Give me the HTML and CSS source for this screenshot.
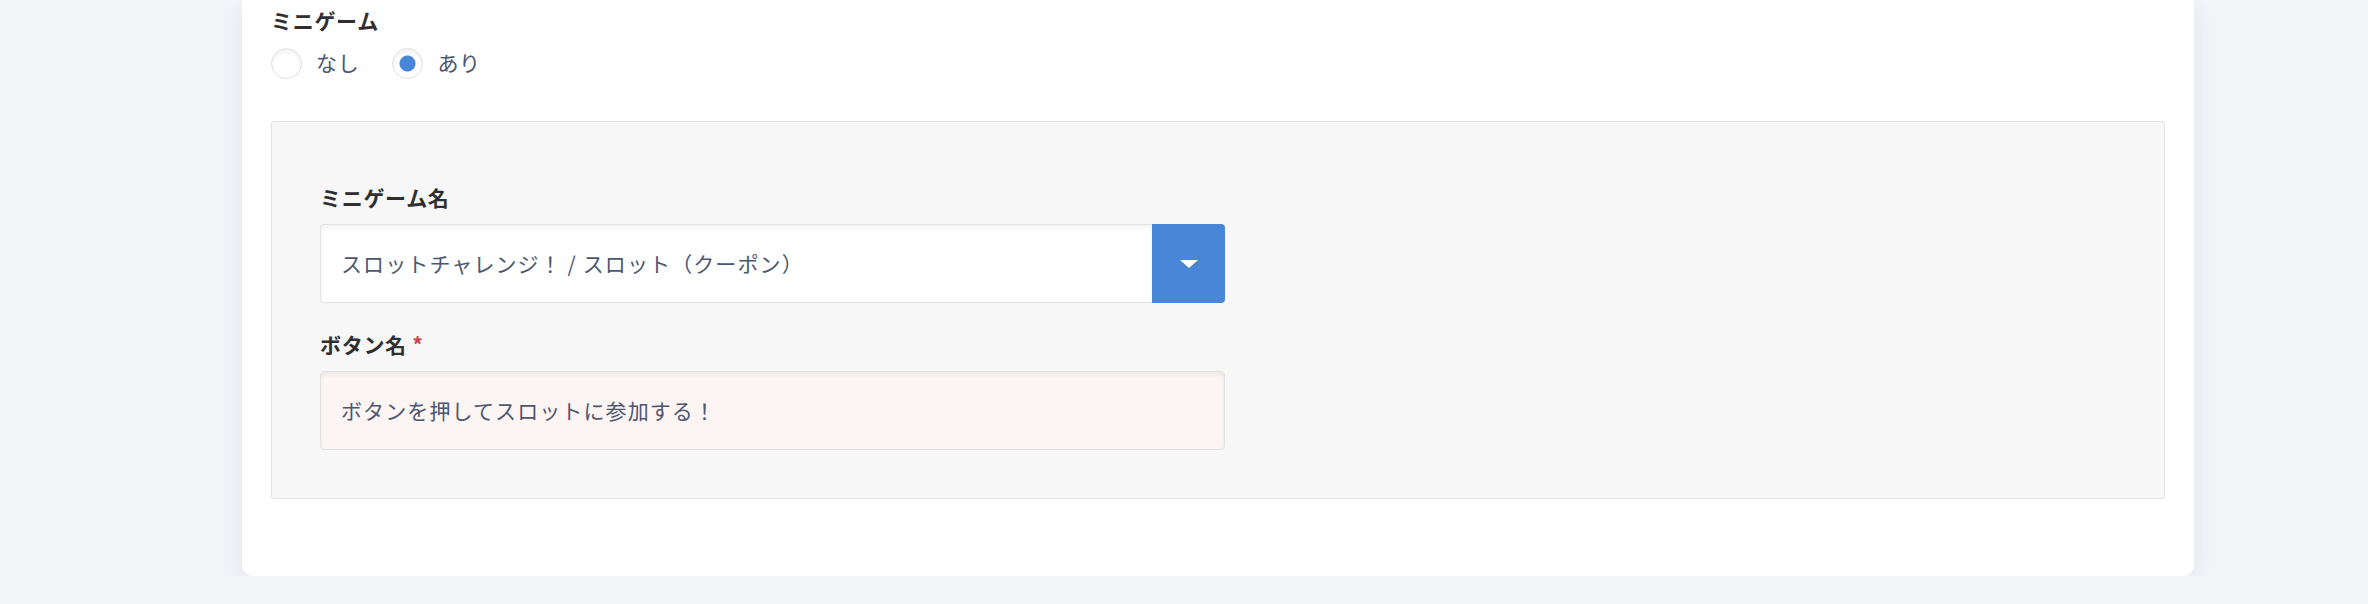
FILE: index.html
```html
<!DOCTYPE html>
<html lang="ja">

<head>
    <meta charset="UTF-8">
    <title>ミニゲーム設定</title>

    <link rel="stylesheet" href="styles.css">
</head>

<body>
    <div class="page">
        <div class="card">
            <div class="field">
                <span class="field-label">ミニゲーム</span>
                <div class="radio-group">
                    <label class="radio-option">
                        <input type="radio" name="minigame" value="0">
                        <span>なし</span>
                    </label>
                    <label class="radio-option">
                        <input type="radio" name="minigame" value="1" checked>
                        <span>あり</span>
                    </label>
                </div>
            </div>

            <div class="sub-panel">
                <div class="field">
                    <label class="field-label">ミニゲーム名</label>
                    <div class="select">
                        <div class="select-value">スロットチャレンジ！ / スロット（クーポン）</div>
                        <button type="button" class="select-toggle"><span class="caret"></span></button>
                    </div>
                </div>

                <div class="field field-next">
                    <label class="field-label" for="buttonName">ボタン名 <span class="required">*</span></label>
                    <input type="text" id="buttonName" class="text-input is-invalid" value="ボタンを押してスロットに参加する！">
                </div>
            </div>
        </div>
    </div>
</body>

</html>
```

FILE: styles.css
```css
body {
    font-family: "Noto Sans CJK JP", sans-serif;
    margin: 0;
    padding: 0;
    background-color: #f4f5f9;
    color: #333;
    letter-spacing: 0.7px;
}

.page {
    padding-left: 242px;
    width: 1952px;
}

.card {
    background-color: #fff;
    border-radius: 0 0 11px 11px;
    box-shadow: 0 6px 26px rgba(40, 50, 100, 0.09);
    padding: 5px 29px 77px 29px;
}

.field-label {
    display: block;
    font-size: 21px;
    line-height: 30px;
    font-weight: bold;
    color: #2f2f2f;
}

.required {
    color: #c8404f;
}

.radio-group {
    display: flex;
    align-items: center;
    margin-top: 13px;
}

.radio-option {
    display: flex;
    align-items: center;
    margin-right: 33px;
    font-size: 21px;
    color: #4b5670;
}

.radio-option span {
    line-height: 28px;
    padding-bottom: 3px;
}

.radio-option input {
    appearance: none;
    -webkit-appearance: none;
    width: 31px;
    height: 31px;
    margin: 0 14px 0 0;
    border: 1px solid #e0e0e0;
    border-radius: 50%;
    background-color: #fff;
    box-shadow: inset 0 3px 4px rgba(0, 0, 0, 0.06);
}

.radio-option input:checked {
    background: radial-gradient(circle, #4a86d8 0, #4a86d8 7.5px, #fff 8.5px);
}

.sub-panel {
    margin-top: 42px;
    padding: 60px 48px 48px 48px;
    background-color: #f7f7f7;
    border: 1px solid #e3e3e3;
    border-radius: 3px;
}

.field-next {
    margin-top: 26px;
}

.sub-panel .field-label {
    margin-bottom: 12px;
}

.select {
    display: flex;
    width: 905px;
    height: 79px;
}

.select-value {
    flex: 1;
    display: flex;
    align-items: center;
    padding: 0 20px 2px 20px;
    background-color: #fff;
    border: 1px solid #e2e2e2;
    border-right: none;
    border-radius: 4px 0 0 4px;
    box-shadow: inset 0 3px 4px rgba(0, 0, 0, 0.05);
    font-size: 21px;
    letter-spacing: 1.1px;
    color: #4b5670;
}

.select-toggle {
    width: 73px;
    border: none;
    border-radius: 0 4px 4px 0;
    background-color: #4a86d8;
    display: flex;
    align-items: center;
    justify-content: center;
    padding: 0;
}

.caret {
    width: 0;
    height: 0;
    border-left: 9px solid transparent;
    border-right: 9px solid transparent;
    border-top: 8px solid #fff;
}

.text-input {
    display: block;
    box-sizing: border-box;
    width: 905px;
    height: 79px;
    padding: 0 20px 2px 20px;
    border: 1px solid #e2e2e2;
    border-radius: 4px;
    background-color: #fff;
    box-shadow: inset 0 3px 4px rgba(0, 0, 0, 0.06);
    font-family: "Noto Sans CJK JP", sans-serif;
    font-size: 21px;
    letter-spacing: 1.1px;
    color: #4b5670;
    outline: none;
}

.text-input.is-invalid {
    background-color: #fdf4f4;
}
```
